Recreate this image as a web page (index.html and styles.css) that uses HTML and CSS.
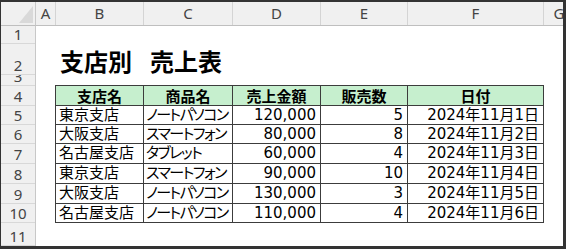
FILE: index.html
```html
<!DOCTYPE html>
<html lang="ja">
<head>
<meta charset="utf-8">
<title>支店別 売上表</title>
<link rel="stylesheet" href="styles.css">
</head>
<body>
<div class="frame">
  <div class="sheet">
    <div class="corner"><div class="tri"></div></div>
    <div class="colheads">
      <div class="ch ca">A</div>
      <div class="ch cb">B</div>
      <div class="ch cc">C</div>
      <div class="ch cd">D</div>
      <div class="ch ce">E</div>
      <div class="ch cf">F</div>
      <div class="ch cg">G</div>
    </div>
    <div class="rowheads">
      <div class="rh h18">1</div>
      <div class="rh h31">2</div>
      <div class="rh h11">3</div>
      <div class="rh h20">4</div>
      <div class="rh h19">5</div>
      <div class="rh h19">6</div>
      <div class="rh h20">7</div>
      <div class="rh h20">8</div>
      <div class="rh h20">9</div>
      <div class="rh h19">10</div>
      <div class="rh rest">11</div>
    </div>
    <div class="cells">
      <div class="row1"></div>
      <h1 class="title">支店別<span class="sp">　</span>売上表</h1>
      <div class="row3"></div>
      <table class="data">
        <colgroup>
          <col class="wb"><col class="wc"><col class="wd"><col class="we"><col class="wf">
        </colgroup>
        <thead>
          <tr class="t20"><th>支店名</th><th>商品名</th><th>売上金額</th><th>販売数</th><th>日付</th></tr>
        </thead>
        <tbody>
          <tr class="t19"><td>東京支店</td><td class="kana">ノートパソコン</td><td class="num">120,000</td><td class="num">5</td><td class="num">2024年11月1日</td></tr>
          <tr class="t19"><td>大阪支店</td><td class="kana">スマートフォン</td><td class="num">80,000</td><td class="num">8</td><td class="num">2024年11月2日</td></tr>
          <tr class="t20"><td>名古屋支店</td><td class="kana">タブレット</td><td class="num">60,000</td><td class="num">4</td><td class="num">2024年11月3日</td></tr>
          <tr class="t20"><td>東京支店</td><td class="kana">スマートフォン</td><td class="num">90,000</td><td class="num">10</td><td class="num">2024年11月4日</td></tr>
          <tr class="t20"><td>大阪支店</td><td class="kana">ノートパソコン</td><td class="num">130,000</td><td class="num">3</td><td class="num">2024年11月5日</td></tr>
          <tr class="t19"><td>名古屋支店</td><td class="kana">ノートパソコン</td><td class="num">110,000</td><td class="num">4</td><td class="num">2024年11月6日</td></tr>
        </tbody>
      </table>
    </div>
  </div>
</div>
</body>
</html>
```
FILE: styles.css
```css
html, body {
  margin: 0;
  padding: 0;
  background: #ffffff;
}

.frame {
  width: 566px;
  height: 249px;
  box-sizing: border-box;
  border-style: solid;
  border-color: #333333;
  border-width: 2px 3px 3px 1px;
  overflow: hidden;
  background: #ffffff;
}

.sheet {
  display: grid;
  grid-template-columns: 35px 1fr;
  grid-template-rows: 24px 1fr;
  width: 580px;
  height: 100%;
}

.corner {
  background: #f0f0f0;
  border-right: 1px solid #c8c8c8;
  border-bottom: 1px solid #bfbfbf;
  box-sizing: border-box;
  display: flex;
  justify-content: flex-end;
  align-items: flex-end;
  padding: 0 2px 2px 0;
}

.tri {
  width: 14px;
  height: 17px;
  background: #d9d9d9;
  clip-path: polygon(100% 0, 100% 100%, 0 100%);
}

.colheads {
  display: flex;
  background: #f0f0f0;
  border-bottom: 1px solid #bfbfbf;
  box-sizing: border-box;
}

.ch {
  box-sizing: border-box;
  border-right: 1px solid #d4d4d4;
  font-family: "Noto Sans", "Open Sans", sans-serif;
  font-size: 15px;
  color: #444444;
  display: flex;
  align-items: center;
  justify-content: center;
  padding-bottom: 1px;
  flex: none;
}

.ca { width: 20px; }
.cb { width: 88px; }
.cc { width: 89px; }
.cd { width: 88px; }
.ce { width: 87px; }
.cf { width: 136px; }
.cg { width: 30px; border-right: none; }

.rowheads {
  display: flex;
  flex-direction: column;
  background: #f0f0f0;
  border-right: 1px solid #c8c8c8;
  box-sizing: border-box;
}

.rh {
  box-sizing: border-box;
  border-bottom: 1px solid #d8d8d8;
  font-family: "Noto Sans", "Open Sans", sans-serif;
  font-size: 15px;
  line-height: 16px;
  color: #444444;
  display: flex;
  justify-content: center;
  align-items: flex-end;
  padding-bottom: 1px;
  overflow: hidden;
  flex: none;
}

.h11 { height: 11px; }
.h18 { height: 18px; }
.h19 { height: 19px; }
.h20 { height: 20px; }
.h31 { height: 31px; }
.rest { flex: 1; }

.cells {
  display: flex;
  flex-direction: column;
  padding-left: 19px;
}

.row1 { height: 18px; flex: none; }
.row3 { height: 10px; flex: none; }

.title {
  margin: 0;
  height: 31px;
  flex: none;
  box-sizing: border-box;
  padding: 2px 0 0 5px;
  font-family: "Noto Sans CJK JP", sans-serif;
  font-size: 24px;
  font-weight: bold;
  line-height: 29px;
  color: #000000;
  white-space: nowrap;
}

.sp { font-size: 18px; }

.data {
  border-collapse: separate;
  border-spacing: 0;
  table-layout: fixed;
  width: 489px;
  border-top: 1px solid #3c3c3c;
  border-left: 1px solid #3c3c3c;
  font-family: "DejaVu Sans", "Noto Sans CJK JP", sans-serif;
  font-size: 15px;
  color: #000000;
}

.wb { width: 88px; }
.wc { width: 89px; }
.wd { width: 88px; }
.we { width: 87px; }
.wf { width: 136px; }

.t19 { height: 19px; }
.t20 { height: 20px; }

.data th,
.data td {
  box-sizing: border-box;
  border-right: 1px solid #3c3c3c;
  border-bottom: 1px solid #3c3c3c;
  padding: 0 3px;
  line-height: 17px;
  white-space: nowrap;
  overflow: hidden;
  vertical-align: middle;
}

.data th {
  background: #c6efce;
  font-family: "Noto Sans CJK JP", sans-serif;
  font-weight: bold;
  text-align: center;
}

.data td {
  text-align: left;
}

.data td.kana {
  padding-left: 2px;
  font-feature-settings: "palt";
  letter-spacing: -1.5px;
}

.data td.num {
  text-align: right;
  padding-right: 4px;
}
```
